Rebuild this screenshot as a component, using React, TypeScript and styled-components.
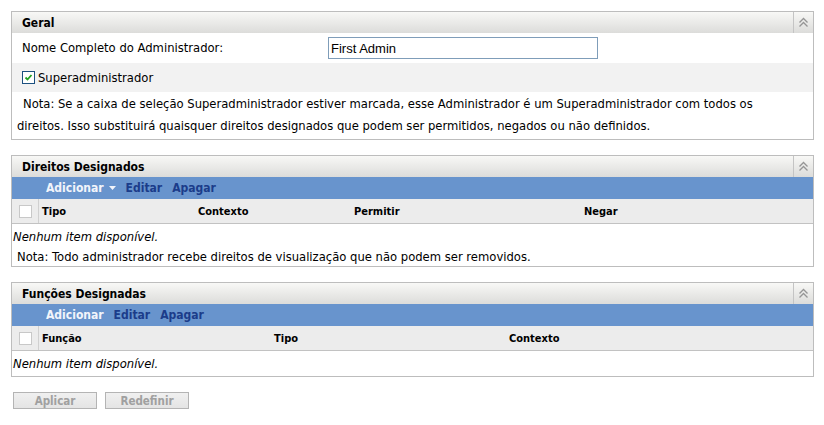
import React from 'react';
import styled, { createGlobalStyle } from 'styled-components';

const GlobalStyle = createGlobalStyle`
  html, body {
    margin: 0;
    padding: 0;
    background: #fff;
  }
  body {
    font-family: "DejaVu Sans", Verdana, sans-serif;
    font-size: 11.6px;
    color: #000;
  }
`;

const boldFont = `"DejaVu Sans Condensed", "DejaVu Sans", Verdana, sans-serif`;

const Page = styled.div`
  padding: 11px 10px 0 11px;
  width: 803px;
`;

const Panel = styled.section`
  border: 1px solid #bdbdbd;
  margin-bottom: 15px;
`;

const PanelHeader = styled.div`
  display: flex;
  align-items: stretch;
  height: 21px;
  background: linear-gradient(#f8f8f6, #dcdcda);
`;

const PanelTitle = styled.div`
  flex: 1;
  display: flex;
  align-items: center;
  padding-left: 10px;
  font-family: ${boldFont};
  font-weight: bold;
  font-size: 12px;
`;

const Collapse = styled.div`
  width: 19px;
  border-left: 1px solid #c4c4c4;
  display: flex;
  align-items: center;
  justify-content: center;
`;

const FieldRow = styled.div<{ $shade?: boolean }>`
  display: flex;
  align-items: center;
  height: ${p => (p.$shade ? 29 : 30)}px;
  padding-left: 10px;
  background: ${p => (p.$shade ? '#f2f2f2' : '#fff')};
`;

const Label = styled.div`
  width: 306px;
`;

const TextInput = styled.input`
  box-sizing: border-box;
  width: 270px;
  height: 22px;
  border: 1px solid #7f9db9;
  padding: 0 2px;
  font-family: "Liberation Sans", Arial, sans-serif;
  font-size: 13px;
  color: #000;
  outline: none;
`;

const CheckLabel = styled.label`
  display: flex;
  align-items: center;
  gap: 3px;
`;

const Box = styled.span<{ $checked?: boolean }>`
  box-sizing: border-box;
  width: 13px;
  height: 13px;
  border: 1px solid ${p => (p.$checked ? '#1c5180' : '#c8c8c8')};
  background: #fff;
  display: inline-flex;
  align-items: center;
  justify-content: center;
`;

const Note = styled.div<{ $indent?: boolean }>`
  padding: ${p => (p.$indent ? '1px 10px 2px 5px' : '0 10px 0 5px')};
  line-height: ${p => (p.$indent ? 22 : 17)}px;
  text-indent: ${p => (p.$indent ? '6px' : '0')};
`;

const Toolbar = styled.div`
  display: flex;
  align-items: center;
  gap: 10px;
  height: 22px;
  padding-left: 34px;
  background: #6894cd;
  font-family: ${boldFont};
  font-weight: bold;
  font-size: 12px;
`;

const ToolLink = styled.span<{ $light?: boolean }>`
  display: inline-flex;
  align-items: center;
  gap: 5px;
  color: ${p => (p.$light ? '#f2f5fb' : '#1b3c8a')};
`;

const ColHeader = styled.div<{ $cols: string }>`
  display: grid;
  grid-template-columns: ${p => p.$cols};
  height: 24px;
  background: #ececec;
  border-bottom: 1px solid #c2c2c2;
  font-family: ${boldFont};
  font-weight: bold;
  font-size: 11px;
`;

const CheckCell = styled.div`
  display: flex;
  align-items: center;
  padding-left: 7px;
  border-right: 1px solid #d0d0d0;
`;

const HeadCell = styled.div`
  display: flex;
  align-items: center;
  padding-left: 3px;
`;

const EmptyRow = styled.div`
  height: 25px;
  display: flex;
  align-items: center;
  padding-left: 1px;
  font-style: italic;
`;

const Buttons = styled.div`
  display: flex;
  gap: 8px;
  padding-left: 2px;
`;

const Button = styled.button`
  box-sizing: border-box;
  width: 84px;
  height: 17px;
  border: 1px solid #b4b4b4;
  background: linear-gradient(#f0f0f0, #e4e4e4);
  color: #a0a0a0;
  font-family: ${boldFont};
  font-weight: bold;
  font-size: 11.5px;
  padding: 0;
`;

function CollapseIcon() {
  return (
    <svg width="11" height="11" viewBox="0 0 11 11">
      <path d="M1.5 5.5 L5.5 1.5 L9.5 5.5 M1.5 9.5 L5.5 5.5 L9.5 9.5" fill="none" stroke="#959595" strokeWidth="1.3" />
    </svg>
  );
}

function Head({ title }: { title: string }) {
  return (
    <PanelHeader>
      <PanelTitle>{title}</PanelTitle>
      <Collapse>
        <CollapseIcon />
      </Collapse>
    </PanelHeader>
  );
}

function Check({ checked }: { checked?: boolean }) {
  return (
    <Box $checked={checked}>
      {checked && (
        <svg width="9" height="9" viewBox="0 0 9 9">
          <path d="M1.5 4.5 L3.5 6.5 L7.5 2" fill="none" stroke="#21a121" strokeWidth="1.8" />
        </svg>
      )}
    </Box>
  );
}

function Caret() {
  return (
    <svg width="7" height="4" viewBox="0 0 7 4">
      <path d="M0 0 H7 L3.5 4 Z" fill="#f2f5fb" />
    </svg>
  );
}

export default function App() {
  return (
    <Page>
      <GlobalStyle />
      <Panel>
        <Head title="Geral" />
        <FieldRow>
          <Label>Nome Completo do Administrador:</Label>
          <TextInput defaultValue="First Admin" />
        </FieldRow>
        <FieldRow $shade>
          <CheckLabel>
            <Check checked />
            Superadministrador
          </CheckLabel>
        </FieldRow>
        <Note $indent>
          Nota: Se a caixa de seleção Superadministrador estiver marcada, esse Administrador é um Superadministrador com todos os
          direitos. Isso substituirá quaisquer direitos designados que podem ser permitidos, negados ou não definidos.
        </Note>
      </Panel>

      <Panel>
        <Head title="Direitos Designados" />
        <Toolbar>
          <ToolLink $light>
            Adicionar <Caret />
          </ToolLink>
          <ToolLink>Editar</ToolLink>
          <ToolLink>Apagar</ToolLink>
        </Toolbar>
        <ColHeader $cols="27px 156px 156px 230px 1fr">
          <CheckCell>
            <Check />
          </CheckCell>
          <HeadCell>Tipo</HeadCell>
          <HeadCell>Contexto</HeadCell>
          <HeadCell>Permitir</HeadCell>
          <HeadCell>Negar</HeadCell>
        </ColHeader>
        <EmptyRow>Nenhum item disponível.</EmptyRow>
        <Note>Nota: Todo administrador recebe direitos de visualização que não podem ser removidos.</Note>
      </Panel>

      <Panel>
        <Head title="Funções Designadas" />
        <Toolbar>
          <ToolLink $light>Adicionar</ToolLink>
          <ToolLink>Editar</ToolLink>
          <ToolLink>Apagar</ToolLink>
        </Toolbar>
        <ColHeader $cols="27px 232px 235px 1fr">
          <CheckCell>
            <Check />
          </CheckCell>
          <HeadCell>Função</HeadCell>
          <HeadCell>Tipo</HeadCell>
          <HeadCell>Contexto</HeadCell>
        </ColHeader>
        <EmptyRow>Nenhum item disponível.</EmptyRow>
      </Panel>

      <Buttons>
        <Button disabled>Aplicar</Button>
        <Button disabled>Redefinir</Button>
      </Buttons>
    </Page>
  );
}
